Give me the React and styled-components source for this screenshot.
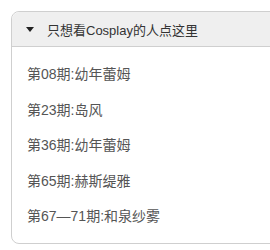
import React from 'react'
import styled, { createGlobalStyle } from 'styled-components'

const GlobalStyle = createGlobalStyle`
    html, body {
        margin: 0;
        padding: 0;
        background: #fff;
        overflow: hidden;
    }
    body {
        font-family: "Liberation Sans", "Noto Sans CJK SC", sans-serif;
    }
`

const Page = styled.div`
    padding: 11px 0 0 11px;
`

const Panel = styled.details`
    width: 300px;
    border: 1px solid #cfcfcf;
    border-radius: 8px;
    box-sizing: border-box;
    background: #fff;
`

const Summary = styled.summary`
    list-style: none;
    display: flex;
    align-items: center;
    height: 34px;
    padding-left: 14px;
    background: #efefef;
    border-bottom: 1px solid #cfcfcf;
    border-radius: 8px 8px 0 0;
    color: #333;
    font-size: 13px;
    cursor: pointer;

    &::-webkit-details-marker {
        display: none;
    }
`

const Arrow = styled.span`
    width: 0;
    height: 0;
    border-left: 4px solid transparent;
    border-right: 4px solid transparent;
    border-top: 5px solid #222;
    margin-right: 13px;
    margin-top: 1px;
`

const List = styled.ul`
    list-style: none;
    margin: 0;
    padding: 10px 0 8px 15px;
`

const Item = styled.li`
    font-size: 14px;
    line-height: 35.5px;
    color: #555;
`

const items = [
    '第08期:幼年蕾姆',
    '第23期:岛风',
    '第36期:幼年蕾姆',
    '第65期:赫斯缇雅',
    '第67—71期:和泉纱雾',
]

const App = () => {
  return (
    <>
    <GlobalStyle />
    <Page>
        <Panel open>
            <Summary>
                <Arrow />
                只想看Cosplay的人点这里
            </Summary>
            <List>
                {items.map((text, i) => (
                    <Item key={i}>{text}</Item>
                ))}
            </List>
        </Panel>
    </Page>
    </>
  )
}

export default App
